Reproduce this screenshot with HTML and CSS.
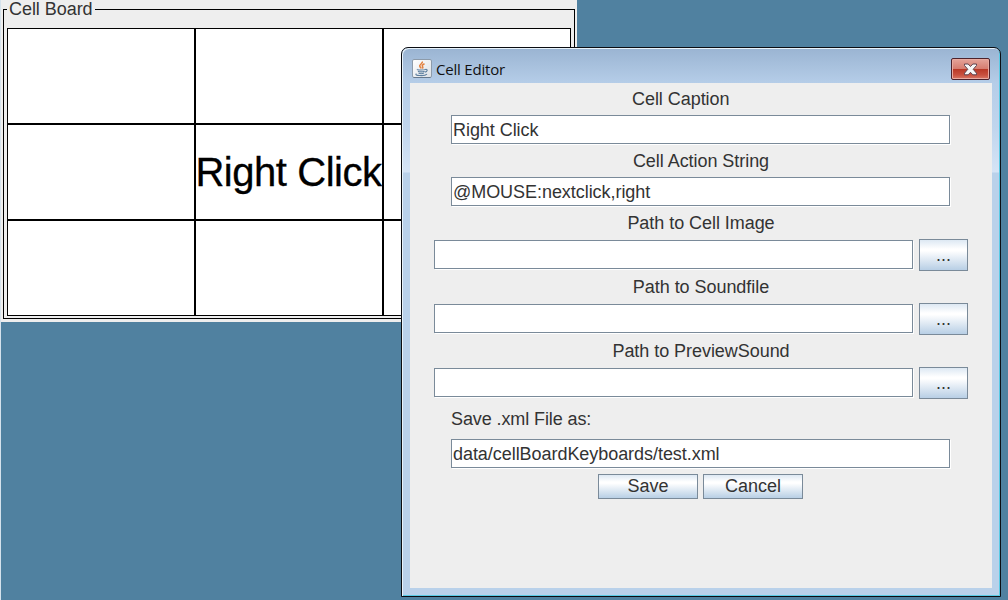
FILE: index.html
```html
<!DOCTYPE html>
<html lang="en">
<head>
<meta charset="utf-8">
<title>Cell Editor</title>
<link rel="stylesheet" href="styles.css">
</head>
<body>
<main class="desktop">
  <section class="board">
    <div class="board-frame">
      <h2 class="board-title">Cell Board</h2>
      <div class="board-grid">
        <div class="cell"></div><div class="cell"></div><div class="cell"></div>
        <div class="cell"></div><div class="cell">Right Click</div><div class="cell"></div>
        <div class="cell"></div><div class="cell"></div><div class="cell"></div>
      </div>
    </div>
  </section>

  <section class="window">
    <header class="titlebar">
      <svg class="app-icon" width="20" height="20" viewBox="0 0 20 20">
        <defs><linearGradient id="tile" x1="0" y1="0" x2="1" y2="1"><stop offset="0" stop-color="#fff"/><stop offset="1" stop-color="#dde1e6"/></linearGradient></defs>
        <rect x=".5" y=".5" width="19" height="18" rx="1.5" fill="url(#tile)" stroke="#8d9baa"/>
        <path d="M1.500 18.500h17" stroke="#66788c"/>
        <path d="M10.300 2.500c1 2-3.700 3-2.500 5 .4.700 1.200 1.200 1.400 2M12.500 4.800c-2.700 1.200-2.600 2-1.800 3 .4.600.2 1.200-.4 1.700" fill="none" stroke="#e2803f" stroke-width="1.500"/>
        <path d="M5.500 10.300c-1.500.9 6.500 1.100 8 .1M6 12.300c1.200.8 5.100.8 6.500 0M6.500 14.100c1.200.6 4.100.6 5.500 0M13.300 10.500c2.900-.6 2.300 2.200-.5 2.800M4.500 14.800c-3.500 1.700 8 2.800 10.500.4" fill="none" stroke="#5d7f9f" stroke-width="1.100"/>
      </svg>
      <h1 class="window-title">Cell Editor</h1>
      <button class="close" aria-label="Close">
        <svg width="15" height="13" viewBox="0 0 15 13">
          <path d="M1.500 1h3.700l2.300 2.500L9.800 1h3.700v1.500L10.200 6.300l3.300 3.900v1.600H9.800L7.500 9.300l-2.300 2.500H1.500v-1.600l3.300-3.900L1.500 2.500z" fill="#f7f7f7" stroke="#5f4550" stroke-width="1"/>
        </svg>
      </button>
    </header>
    <form class="form">
      <label class="label label-short">Cell Caption</label>
      <div class="field">Right Click</div>
      <label class="label">Cell Action String</label>
      <div class="field">@MOUSE:nextclick,right</div>
      <label class="label">Path to Cell Image</label>
      <div class="row"><div class="field path"></div><button type="button" class="button browse">...</button></div>
      <label class="label">Path to Soundfile</label>
      <div class="row"><div class="field path"></div><button type="button" class="button browse">...</button></div>
      <label class="label">Path to PreviewSound</label>
      <div class="row"><div class="field path"></div><button type="button" class="button browse">...</button></div>
      <label class="label label-save">Save .xml File as:</label>
      <div class="field">data/cellBoardKeyboards/test.xml</div>
      <div class="actions">
        <button type="button" class="button">Save</button>
        <button type="button" class="button">Cancel</button>
      </div>
    </form>
  </section>
</main>
</body>
</html>
```
FILE: styles.css
```css
* {
  box-sizing: border-box;
}

body {
  margin: 0;
  font: 18px/20px "Liberation Sans", Arial, sans-serif;
  color: #333;
}

.desktop {
  position: relative;
  width: 1008px;
  height: 600px;
  overflow: hidden;
  background: #5081a0;
  border-left: 1px solid #d5e2ec;
}

.board {
  width: 576px;
  height: 322px;
  padding: 9px 2px 3px;
  background: #eee;
}

.board-frame {
  height: 310px;
  border: 1px solid #000;
  padding: 0 3px;
}

.board-title {
  width: 88px;
  height: 18px;
  margin: -11px 0 0;
  padding-left: 2px;
  font: inherit;
  letter-spacing: -0.05px;
  white-space: nowrap;
  background: #eee;
}

.board-grid {
  display: grid;
  grid-template: repeat(3, 96px) / repeat(3, 188px);
  margin-top: 11px;
}

.cell {
  display: flex;
  align-items: center;
  justify-content: center;
  padding-right: 1px;
  border: 1px solid #000;
  background: #fff;
  color: #000;
  font-size: 40px;
  letter-spacing: -0.45px;
  white-space: nowrap;
  -webkit-text-stroke: 0.3px #000;
}

.window {
  position: absolute;
  left: 400px;
  top: 47px;
  width: 600px;
  height: 550px;
  padding: 0 8px 8px;
  border: 1px solid #0b0d12;
  border-radius: 7px 7px 0 0;
  background: linear-gradient(#9ab4d2 0, #b5cde8 35px, #c0d5ed 80px, #d5e4f6 124px, #b9d1ea 125px);
  box-shadow: inset 1px 1px #e8f3fb, inset -1px -1px #59cbe5;
}

.titlebar {
  display: flex;
  align-items: flex-start;
  height: 35px;
  padding: 10px 2px 0;
}

.app-icon {
  margin-top: 1px;
}

.window-title {
  flex: 1;
  margin: 1px 0 0 4px;
  font: 15px/20px "Open Sans", "Noto Sans", sans-serif;
  letter-spacing: -0.2px;
  color: #111;
}

.close {
  display: flex;
  align-items: center;
  justify-content: center;
  width: 39px;
  height: 22px;
  padding: 0;
  border: 1px solid #4d222b;
  border-radius: 2px;
  background: linear-gradient(#e5a49a, #d67d70 48%, #b83725 50%, #c9513f 80%, #d87866);
  box-shadow: inset 0 0 0 1px #e9aaa0;
}

.form {
  display: flex;
  flex-direction: column;
  align-items: center;
  width: 582px;
  height: 505px;
  margin: 0;
  background: #eee;
}

.label {
  height: 32px;
  line-height: 32px;
  letter-spacing: -0.05px;
}

.label-short {
  width: 138px;
}

.label-save {
  width: 500px;
  height: 40px;
  line-height: 40px;
  letter-spacing: -0.1px;
}

.field {
  flex: none;
  width: 499px;
  height: 29px;
  margin: 0 1px 1px 0;
  padding-left: 1px;
  border: 1px solid #7a8a99;
  background: #fff;
  box-shadow: 1px 1px #fff;
  line-height: 29px;
  letter-spacing: -0.05px;
}

.row {
  display: flex;
  align-items: center;
  gap: 5px;
  height: 32px;
}

.path {
  width: 479px;
}

.button {
  width: 100px;
  height: 25px;
  padding: 0 0 1px;
  border: 1px solid #7a8a99;
  background: linear-gradient(#dde8f3, #fff 30%, #fff 36%, #b8cfe5);
  color: #333;
  font: 18px/22px "Liberation Sans", Arial, sans-serif;
}

.browse {
  width: 49px;
  height: 32px;
  padding: 0;
}

.actions {
  display: flex;
  gap: 5px;
  margin: 5px 1px 0 0;
}
```
